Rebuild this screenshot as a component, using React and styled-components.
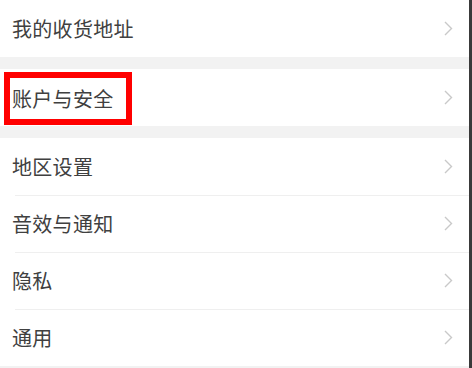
import React from 'react';
import styled, { createGlobalStyle } from 'styled-components';

const GlobalStyle = createGlobalStyle`
  html, body {
    margin: 0;
    padding: 0;
    background: #f2f2f2;
  }
`;

const Page = styled.div`
  width: 472px;
  height: 368px;
  box-sizing: border-box;
  border-right: 3px solid #3a3a3a;
  background: #f2f2f2;
  overflow: hidden;
  font-family: "Noto Sans CJK SC", "Noto Sans", sans-serif;
`;

const Group = styled.div`
  background: #fff;
  margin-bottom: 12px;
`;

const Row = styled.div`
  display: flex;
  align-items: center;
  justify-content: space-between;
  height: 57px;
  padding: 0 16px 0 12px;
  box-sizing: border-box;
  background: #fff;
  & + & {
    background: linear-gradient(#efefef, #efefef) 15px 0 / calc(100% - 15px) 1px no-repeat, #fff;
  }
`;

const Label = styled.span`
  font-size: 20px;
  color: #404040;
  letter-spacing: 0.3px;
  ${({ $highlighted }) =>
    $highlighted &&
    `
    display: flex;
    align-items: center;
    height: 53px;
    box-sizing: border-box;
    margin: 2px 0 0 -8px;
    padding: 0 12px 0 2px;
    border: 6px solid #ff0000;
  `}
`;

const Chevron = () => (
  <svg width="9" height="15" viewBox="0 0 9 15">
    <path d="M1 1 L7.5 7.5 L1 14" fill="none" stroke="#c9c9c9" strokeWidth="1.4" />
  </svg>
);

const groups = [
  [{ title: '我的收货地址' }],
  [{ title: '账户与安全', highlighted: true }],
  [{ title: '地区设置' }, { title: '音效与通知' }, { title: '隐私' }, { title: '通用' }],
];

function App() {
  return (
    <Page>
      <GlobalStyle />
      {groups.map((items, i) => (
        <Group key={i}>
          {items.map((item) => (
            <Row key={item.title}>
              <Label $highlighted={item.highlighted}>{item.title}</Label>
              <Chevron />
            </Row>
          ))}
        </Group>
      ))}
    </Page>
  );
}

export default App;
